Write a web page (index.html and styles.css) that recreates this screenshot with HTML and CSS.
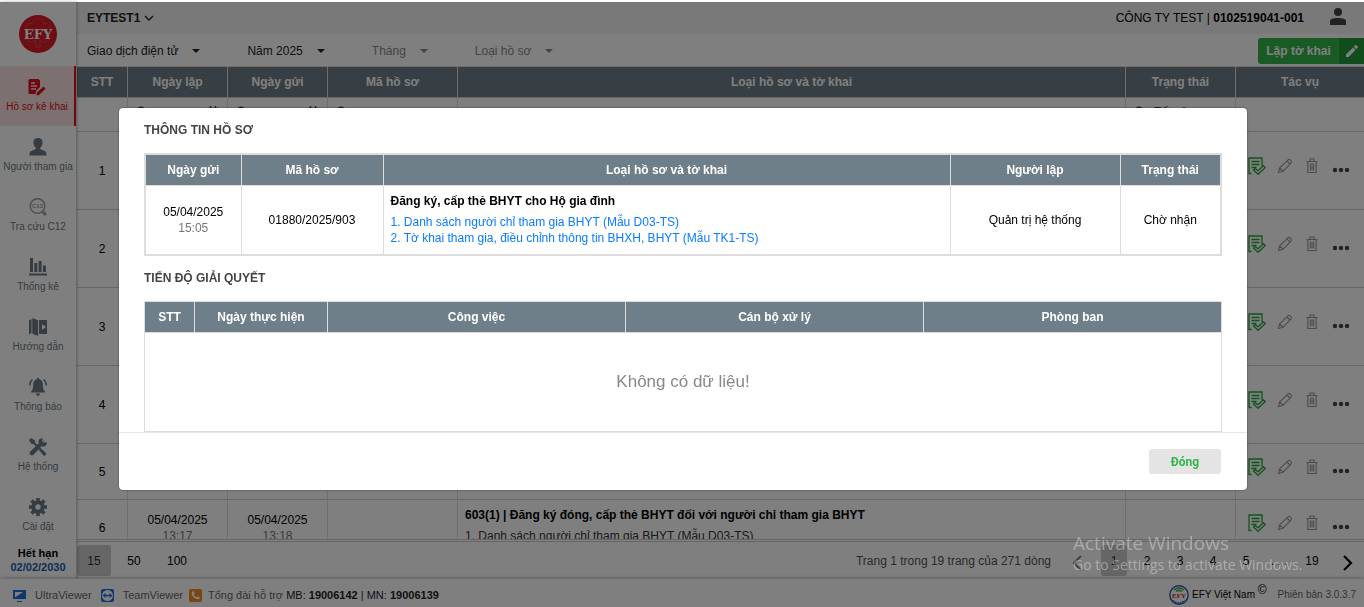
FILE: index.html
```html
<!DOCTYPE html>
<html lang="vi">
<head>
  <meta charset="UTF-8" />
  <meta name="viewport" content="width=device-width, initial-scale=1.0"/>
  <title>EFY - Hồ sơ kê khai</title>
  <link rel="stylesheet" href="styles.css">
</head>
<body>
  <svg class="sprite" aria-hidden="true">
    <symbol id="i-list" viewBox="0 0 18 18">
      <path d="M3.500 16.500H1V1h13v8M3.500 4.500h8M3.500 7.500h8M3.500 10.500h5" fill="none" stroke="currentColor" stroke-width="1.3"/>
      <path d="M5.500 13l1.600-1.600 2.900 2.400 5.400-5 1.900 1.700-7.200 6.800z" fill="none" stroke="currentColor" stroke-width="1.3" stroke-linejoin="round"/>
    </symbol>
    <symbol id="i-edit" viewBox="0 0 16 16">
      <path d="M1.500 14.500l1-4.500L11 1.800c1.500-1.200 4.400 1.300 3.200 3L6 13.200zM10 3l3 3M2.500 10l3.500 3.200" fill="none" stroke="currentColor" stroke-width="1.1"/>
    </symbol>
    <symbol id="i-trash" viewBox="0 0 12 16">
      <path d="M.5 3.500h11M4 3V1h4v2M1.800 4v10.500h8.400V4M4.300 5.500v7M6 5.500v7M7.700 5.500v7" fill="none" stroke="currentColor" stroke-width="1.1"/>
    </symbol>
    <symbol id="i-dots" viewBox="0 0 18 6">
      <circle cx="3" cy="3" r="2.200"/><circle cx="9" cy="3" r="2.200"/><circle cx="15" cy="3" r="2.200"/>
    </symbol>
    <symbol id="i-search" viewBox="0 0 12 12">
      <circle cx="5" cy="5" r="3.800" fill="none" stroke="currentColor" stroke-width="1.400"/><path d="M8 8l3.500 3.500" stroke="currentColor" stroke-width="1.600"/>
    </symbol>
    <symbol id="i-cal" viewBox="0 0 12 12">
      <path d="M1 2.500h10v9H1zM3.500 0v3M8.500 0v3M1 5.500h10" fill="none" stroke="currentColor" stroke-width="1.400"/>
    </symbol>
  </svg>

  <div class="app">
    <div class="main">
      <nav class="sidebar">
        <a class="logo" href="#">
          <svg width="40" height="40" viewBox="0 0 40 40">
            <circle cx="20" cy="20" r="19" fill="#d81c28"/>
            <g fill="none" stroke="#e85a62" stroke-width="1" opacity=".6">
              <path d="M9 16c-3-4 1-8 5-6 0-7 12-7 12 0 4-2 8 2 5 6M9 25c2 4 7 4 9 1v7h4v-7c2 3 7 3 9-1"/>
            </g>
            <text x="20" y="25" class="logo-text" text-anchor="middle">EFY</text>
          </svg>
        </a>
        <a class="nav-item active" href="#">
          <svg width="18" height="18" viewBox="0 0 18 18">
            <path d="M2 1h8.500l1.500 1.500V9L8 13l-.5 3H2a1.500 1.500 0 0 1-1.500-1.500v-12A1.500 1.500 0 0 1 2 1z"/>
            <path d="M3 5h4M3 8h6M3 11h5" stroke="#fdd" stroke-width="1.300"/>
            <path d="M9 14.500L15.500 8.500l2 2.200L11 17l-2.500.5z"/>
          </svg>
          <span>Hồ sơ kê khai</span>
        </a>
        <a class="nav-item" href="#">
          <svg width="18" height="18" viewBox="0 0 18 18"><path d="M9 0c3.200 0 4.800 2.200 4.500 5-.2 2.500-1.300 4.200-2.500 5 0 1 .8 1.600 3 2.300 2.500.8 3.500 1.700 3.500 5.200H.5C.5 14 1.500 13.100 4 12.300c2.200-.7 3-1.300 3-2.300C5.800 9.200 4.700 7.500 4.500 5 4.200 2.200 5.800 0 9 0z"/></svg>
          <span>Người tham gia</span>
        </a>
        <a class="nav-item" href="#">
          <svg width="18" height="18" viewBox="0 0 18 18" class="faded"><circle cx="8.500" cy="8" r="7.300" fill="none" stroke="currentColor" stroke-width="1.500"/><path d="M13 13l4 4" stroke="currentColor" stroke-width="3"/><text x="8.500" y="10" class="c12" text-anchor="middle">C12</text></svg>
          <span>Tra cứu C12</span>
        </a>
        <a class="nav-item" href="#">
          <svg width="18" height="18" viewBox="0 0 18 18"><path d="M1 0h3v14H1zM5.300 5h3v9h-3zM9.600 3h3v11h-3zM13.900 7.500h3V14h-3zM0 15.500h18v2H0z"/></svg>
          <span>Thống kê</span>
        </a>
        <a class="nav-item" href="#">
          <svg width="18" height="18" viewBox="0 0 18 18"><path d="M0 2.500L2.500 1v14L0 16.500zM3.300 0L9 2.300V18l-5.700-2.500zM10 2h8v14h-8z"/><path d="M13 6l4 3-4 3z" fill="#fff"/></svg>
          <span>Hướng dẫn</span>
        </a>
        <a class="nav-item" href="#">
          <svg width="18" height="18" viewBox="0 0 18 18"><path d="M9 0c.8 0 1.300.5 1.300 1.300 2.200.6 3.500 2.500 3.500 5.200 0 4 .7 5.500 2 6.500v1.500H2.200V13c1.300-1 2-2.500 2-6.500 0-2.700 1.300-4.600 3.500-5.200C7.700.5 8.200 0 9 0zM7 15.500h4c0 1.500-1 2.300-2 2.300s-2-.8-2-2.300z"/><path d="M3.500 1.500C1.600 3 .7 5 .7 7.500M14.500 1.500c1.900 1.500 2.800 3.500 2.800 6" fill="none" stroke="currentColor" stroke-width="1.300"/></svg>
          <span>Thông báo</span>
        </a>
        <a class="nav-item" href="#">
          <svg width="18" height="18" viewBox="0 0 18 18"><path d="M2 0l4 2.500v2L8.500 7 7 8.500 4.500 6h-2L0 2z"/><path d="M11 9.500l6 5.500c1 1.500-1 3.500-2.500 2.500L9.500 11.500z"/><path d="M16.300 1.500L13.500 4.300l-.2-.2.200-3.900C10.500-.3 8.800 2.500 9.700 5.500L1.200 13.500c-2 2.300 1 5.200 3.300 3.300l8-8.500c3 .9 5.800-1 5.300-4l-3.600.4z"/></svg>
          <span>Hệ thống</span>
        </a>
        <a class="nav-item" href="#">
          <svg width="18" height="18" viewBox="0 0 18 18"><circle cx="9" cy="9" r="4.700" fill="none" stroke="currentColor" stroke-width="4"/><path d="M9 0v3M9 15v3M0 9h3M15 9h3M2.600 2.600l2.200 2.200M13.200 13.200l2.200 2.200M2.600 15.400l2.200-2.200M13.200 4.800l2.200-2.200" stroke="currentColor" stroke-width="3.600"/></svg>
          <span>Cài đặt</span>
        </a>
        <div class="expire">Hết hạn<br><b>02/02/2030</b></div>
      </nav>

      <div class="content">
        <header class="topbar">
          <button class="account">EYTEST1
            <svg width="10" height="6" viewBox="0 0 10 6"><path d="M1 1l4 4 4-4" fill="none" stroke="currentColor" stroke-width="1.400"/></svg>
          </button>
          <div class="company">CÔNG TY TEST | <b>0102519041-001</b></div>
          <button class="user" aria-label="Tài khoản">
            <svg width="16" height="17" viewBox="0 0 16 17"><circle cx="8" cy="4" r="4"/><path d="M0 17v-4c0-2 3-3 8-3s8 1 8 3v4z"/></svg>
          </button>
        </header>

        <div class="filters">
          <button class="filter f-type">Giao dịch điện tử<i class="caret"></i></button>
          <button class="filter f-year">Năm 2025<i class="caret"></i></button>
          <button class="filter f-month muted">Tháng<i class="caret"></i></button>
          <button class="filter muted">Loại hồ sơ<i class="caret"></i></button>
          <div class="create">
            <button class="create-text">Lập tờ khai</button>
            <button class="create-icon" aria-label="Sửa">
              <svg width="12" height="12" viewBox="0 0 12 12"><path d="M0 12V9.500L7 2.500 9.500 5l-7 7zM7.700 1.800L9.300.2c.4-.3.800-.3 1.100 0l1.400 1.400c.3.300.3.800 0 1.100l-1.600 1.600z"/></svg>
            </button>
          </div>
        </div>

        <div class="grid-scroll">
          <table class="grid">
            <colgroup>
              <col class="w-stt"><col class="w-date"><col class="w-date"><col class="w-code"><col><col class="w-state"><col class="w-act">
            </colgroup>
            <thead>
              <tr><th>STT</th><th>Ngày lập</th><th>Ngày gửi</th><th>Mã hồ sơ</th><th>Loại hồ sơ và tờ khai</th><th>Trạng thái</th><th>Tác vụ</th></tr>
            </thead>
            <tbody>
              <tr class="search-row">
                <td></td>
                <td><div class="search"><svg><use href="#i-search"/></svg><input type="text" aria-label="Ngày lập"><svg><use href="#i-cal"/></svg></div></td>
                <td><div class="search"><svg><use href="#i-search"/></svg><input type="text" aria-label="Ngày gửi"><svg><use href="#i-cal"/></svg></div></td>
                <td><div class="search"><svg><use href="#i-search"/></svg><input type="text" aria-label="Mã hồ sơ"></div></td>
                <td></td>
                <td><div class="search"><svg><use href="#i-search"/></svg><select aria-label="Trạng thái"><option>Tất cả</option></select></div></td>
                <td></td>
              </tr>
              <tr class="tall">
                <td>1</td><td></td><td></td><td></td><td></td><td></td>
                <td><div class="actions"><button class="ok" aria-label="Chi tiết"><svg width="18" height="18"><use href="#i-list"/></svg></button><button aria-label="Sửa"><svg width="16" height="16"><use href="#i-edit"/></svg></button><button class="del" aria-label="Xóa"><svg width="12" height="16"><use href="#i-trash"/></svg></button><button class="more" aria-label="Thêm"><svg width="18" height="6"><use href="#i-dots"/></svg></button></div></td>
              </tr>
              <tr class="tall">
                <td>2</td><td></td><td></td><td></td><td></td><td></td>
                <td><div class="actions"><button class="ok" aria-label="Chi tiết"><svg width="18" height="18"><use href="#i-list"/></svg></button><button aria-label="Sửa"><svg width="16" height="16"><use href="#i-edit"/></svg></button><button class="del" aria-label="Xóa"><svg width="12" height="16"><use href="#i-trash"/></svg></button><button class="more" aria-label="Thêm"><svg width="18" height="6"><use href="#i-dots"/></svg></button></div></td>
              </tr>
              <tr class="tall">
                <td>3</td><td></td><td></td><td></td><td></td><td></td>
                <td><div class="actions"><button class="ok" aria-label="Chi tiết"><svg width="18" height="18"><use href="#i-list"/></svg></button><button aria-label="Sửa"><svg width="16" height="16"><use href="#i-edit"/></svg></button><button class="del" aria-label="Xóa"><svg width="12" height="16"><use href="#i-trash"/></svg></button><button class="more" aria-label="Thêm"><svg width="18" height="6"><use href="#i-dots"/></svg></button></div></td>
              </tr>
              <tr class="tall">
                <td>4</td><td></td><td></td><td></td><td></td><td></td>
                <td><div class="actions"><button class="ok" aria-label="Chi tiết"><svg width="18" height="18"><use href="#i-list"/></svg></button><button aria-label="Sửa"><svg width="16" height="16"><use href="#i-edit"/></svg></button><button class="del" aria-label="Xóa"><svg width="12" height="16"><use href="#i-trash"/></svg></button><button class="more" aria-label="Thêm"><svg width="18" height="6"><use href="#i-dots"/></svg></button></div></td>
              </tr>
              <tr class="short">
                <td>5</td><td></td><td></td><td></td><td></td><td></td>
                <td><div class="actions"><button class="ok" aria-label="Chi tiết"><svg width="18" height="18"><use href="#i-list"/></svg></button><button aria-label="Sửa"><svg width="16" height="16"><use href="#i-edit"/></svg></button><button class="del" aria-label="Xóa"><svg width="12" height="16"><use href="#i-trash"/></svg></button><button class="more" aria-label="Thêm"><svg width="18" height="6"><use href="#i-dots"/></svg></button></div></td>
              </tr>
              <tr class="short">
                <td>6</td>
                <td>05/04/2025<div class="time">13:17</div></td>
                <td>05/04/2025<div class="time">13:18</div></td>
                <td></td>
                <td class="docs"><b>603(1) | Đăng ký đóng, cấp thẻ BHYT đối với người chỉ tham gia BHYT</b><div>1. Danh sách người chỉ tham gia BHYT (Mẫu D03-TS)</div></td>
                <td></td>
                <td><div class="actions"><button class="ok" aria-label="Chi tiết"><svg width="18" height="18"><use href="#i-list"/></svg></button><button aria-label="Sửa"><svg width="16" height="16"><use href="#i-edit"/></svg></button><button class="del" aria-label="Xóa"><svg width="12" height="16"><use href="#i-trash"/></svg></button><button class="more" aria-label="Thêm"><svg width="18" height="6"><use href="#i-dots"/></svg></button></div></td>
              </tr>
            </tbody>
          </table>
        </div>

        <div class="pager">
          <button class="size selected">15</button>
          <button class="size">50</button>
          <button class="size">100</button>
          <span class="info">Trang 1 trong 19 trang của 271 dòng</span>
          <div class="pages">
            <button class="arrow prev" aria-label="Trang trước"><svg width="10" height="16" viewBox="0 0 10 16"><path d="M9 1L2 8l7 7" fill="none" stroke="currentColor" stroke-width="2"/></svg></button>
            <button class="selected">1</button>
            <button>2</button>
            <button>3</button>
            <button>4</button>
            <button>5</button>
            <button>. . .</button>
            <button>19</button>
            <button class="arrow" aria-label="Trang sau"><svg width="10" height="16" viewBox="0 0 10 16"><path d="M1 1l7 7-7 7" fill="none" stroke="currentColor" stroke-width="2.200"/></svg></button>
          </div>
        </div>
      </div>
    </div>

    <footer class="footer">
      <a class="ultra" href="#"><svg width="13" height="13" viewBox="0 0 13 13"><path d="M0 1h13v9H0zM4 12h5v1H4z" fill="#1f72dd"/><path d="M2 8.500V3h8z" fill="#fff"/></svg>UltraViewer</a>
      <a href="#"><svg width="13" height="13" viewBox="0 0 13 13"><rect width="13" height="13" rx="2" fill="#1f72dd"/><circle cx="6.500" cy="6.500" r="5.500" fill="#fff"/><path d="M1.500 6.500L4.500 4v1.800h4V4l3 2.500-3 2.500V7.300h-4V9z" fill="#1f72dd"/></svg>TeamViewer</a>
      <div class="support"><svg width="13" height="13" viewBox="0 0 13 13"><rect width="13" height="13" rx="2" fill="#f28a20"/><path d="M3 2.500l1.500-.5 1.300 2.500-1 1c.5 1.300 1.400 2.200 2.700 2.700l1-1L11 8.500 10.500 10c-4 1.500-9-3.500-7.500-7.500z" fill="#fff"/></svg><div>Tổng đài hỗ trợ <span>MB: <b>19006142</b> | MN: <b>19006139</b></span></div></div>
      <div class="brand">
        <svg width="20" height="20" viewBox="0 0 20 20"><circle cx="10" cy="10" r="9.200" fill="#fff" stroke="#1c5fae" stroke-width="1.400"/><path d="M5 5c3-2.500 7-2.500 10 0M7 6.500c2-1.500 4-1.500 6 0" fill="none" stroke="#3fae49" stroke-width="1.500"/><path d="M4 15.500c3.500 3 8.500 3 12 0" fill="none" stroke="#1c5fae" stroke-width="1.500" stroke-dasharray="1.500 1"/><text x="10" y="13" class="brand-text" text-anchor="middle">EFY</text></svg>
        <span class="name">EFY Việt Nam <sup>©</sup></span>
        <span>Phiên bản 3.0.3.7</span>
      </div>
    </footer>
  </div>

  <div class="overlay">
    <div class="modal" role="dialog" aria-modal="true" aria-labelledby="modal-title">
      <div class="modal-body">
        <h2 id="modal-title">THÔNG TIN HỒ SƠ</h2>
        <table class="detail info-table">
          <colgroup><col class="c-date"><col class="c-code"><col><col class="c-user"><col class="c-state"></colgroup>
          <thead>
            <tr><th>Ngày gửi</th><th>Mã hồ sơ</th><th>Loại hồ sơ và tờ khai</th><th>Người lập</th><th>Trạng thái</th></tr>
          </thead>
          <tbody>
            <tr>
              <td>05/04/2025<div class="time">15:05</div></td>
              <td>01880/2025/903</td>
              <td class="docs"><b>Đăng ký, cấp thẻ BHYT cho Hộ gia đình</b><a href="#">1. Danh sách người chỉ tham gia BHYT (Mẫu D03-TS)</a><a href="#">2. Tờ khai tham gia, điều chỉnh thông tin BHXH, BHYT (Mẫu TK1-TS)</a></td>
              <td>Quản trị hệ thống</td>
              <td>Chờ nhận</td>
            </tr>
          </tbody>
        </table>
        <h2>TIẾN ĐỘ GIẢI QUYẾT</h2>
        <table class="detail progress-table">
          <colgroup><col class="c-stt"><col class="c-done"><col><col><col></colgroup>
          <thead>
            <tr><th>STT</th><th>Ngày thực hiện</th><th>Công việc</th><th>Cán bộ xử lý</th><th>Phòng ban</th></tr>
          </thead>
          <tbody>
            <tr><td colspan="5" class="empty">Không có dữ liệu!</td></tr>
          </tbody>
        </table>
      </div>
      <div class="modal-footer">
        <button class="close">Đóng</button>
      </div>
    </div>
  </div>

  <div class="watermark">
    <div class="line1">Activate Windows</div>
    <div class="line2">Go to Settings to activate Windows.</div>
  </div>
</body>
</html>
```
FILE: styles.css
```css
:root {
  --slate: #6f7f89;
  --line: #ddd;
  --red: #df1119;
  --green: #34b44a;
}
* {
  box-sizing: border-box;
}
body {
  margin: 0;
  font-family: "Liberation Sans", Arial, sans-serif;
  font-size: 12px;
  line-height: 16px;
  color: #000;
  background: #fff;
}
button, input, select {
  font: inherit;
  color: inherit;
  background: none;
  border: none;
  padding: 0;
  cursor: pointer;
}
a {
  color: inherit;
  text-decoration: none;
}
svg {
  display: block;
  fill: currentColor;
}
.sprite {
  position: absolute;
  width: 0;
  height: 0;
}
.app {
  height: 100vh;
  padding-top: 2px;
  display: flex;
  flex-direction: column;
  overflow: hidden;
}
.main {
  flex: 1;
  min-height: 0;
  display: flex;
}

/* sidebar */
.sidebar {
  width: 77px;
  border-right: 1px solid #d0d0d0;
  box-shadow: 0 0 3px rgba(0,0,0,0.3);
  z-index: 1;
}
.logo {
  height: 64px;
  display: flex;
  align-items: center;
  justify-content: center;
}
.logo-text {
  font: bold 13px "DejaVu Serif", serif;
  fill: #fff;
}
.nav-item {
  height: 60px;
  padding-top: 12px;
  display: flex;
  flex-direction: column;
  align-items: center;
  gap: 4px;
  font-size: 10px;
  line-height: 14px;
  color: #6b7a84;
  white-space: nowrap;
}
.nav-item.active {
  color: var(--red);
  background: #fbe0e0;
  border-right: 2px solid var(--red);
}
.faded {
  opacity: 0.7;
}
.c12 {
  font-size: 6px;
  font-weight: bold;
}
.expire {
  font-size: 11px;
  line-height: 14px;
  text-align: center;
  font-weight: bold;
}
.expire b {
  color: #1a5cad;
}

/* top bar and filters */
.content {
  flex: 1;
  min-width: 0;
  display: flex;
  flex-direction: column;
}
.topbar {
  height: 32px;
  padding: 0 18px 0 10px;
  background: #f2f2f2;
  display: flex;
  align-items: center;
}
.account {
  display: flex;
  align-items: center;
  gap: 4px;
  font-weight: bold;
  color: #222;
}
.company {
  margin-left: auto;
}
.user {
  margin-left: 26px;
  padding-bottom: 4px;
  color: #444;
}
.filters {
  height: 32px;
  padding: 2px 0 0 10px;
  display: flex;
  align-items: center;
  color: #222;
}
.filter {
  display: flex;
  align-items: center;
  gap: 14px;
  white-space: nowrap;
}
.f-type, .f-year, .f-month {
  margin-right: 47px;
}
.muted {
  color: #888;
}
.caret {
  border: 4px solid transparent;
  border-top-color: currentColor;
  border-bottom: none;
}
.create {
  margin-left: auto;
  height: 26px;
  display: flex;
  color: #fff;
  border-radius: 3px 0 0 3px;
  overflow: hidden;
}
.create-text {
  width: 81px;
  background: var(--green);
  font-weight: bold;
}
.create-icon {
  width: 25px;
  display: flex;
  align-items: center;
  justify-content: center;
  background: #239a38;
}

/* main grid */
.grid-scroll {
  flex: 1;
  min-height: 0;
  overflow: hidden;
  border-top: 1px solid var(--line);
  border-bottom: 1px solid #ccc;
}
.grid {
  width: 100%;
  table-layout: fixed;
  border-collapse: separate;
  border-spacing: 0;
}
.w-stt { width: 51px; }
.w-date { width: 100px; }
.w-code { width: 130px; }
.w-state { width: 110px; }
.w-act { width: 128px; }
.grid th, .grid td {
  padding: 0;
  text-align: center;
  border-right: 1px solid var(--line);
  border-bottom: 1px solid #ccc;
}
.grid th:last-child, .grid td:last-child {
  border-right: none;
}
.grid th {
  height: 31px;
  color: #fff;
  background: var(--slate);
}
.search-row td { height: 34px; }
.tall td { height: 78px; }
.short td { height: 56px; }
.time {
  color: #777;
}
.grid .docs {
  padding: 7px 7px 0;
  text-align: left;
  vertical-align: top;
  color: #333;
}
.grid .docs b {
  display: block;
  margin-bottom: 5px;
  color: #000;
}
.search {
  display: flex;
  align-items: center;
  gap: 8px;
  margin: 0 8px 5px;
  color: #444;
}
.search svg {
  width: 12px;
  height: 12px;
  flex: none;
}
.search input, .search select {
  flex: 1;
  min-width: 0;
  appearance: none;
}
.actions {
  display: flex;
  align-items: center;
  gap: 11px;
  padding: 0 0 10px 12px;
  color: #999;
}
.actions .ok {
  color: #27a53d;
}
.actions .del {
  margin-left: 2px;
}
.actions .more {
  color: #444;
  padding-top: 8px;
  margin-left: 3px;
}

/* pager */
.pager {
  height: 38px;
  margin-top: 1px;
  padding-right: 11px;
  border-top: 1px solid #ccc;
  display: flex;
  align-items: center;
}
.pager button {
  height: 31px;
  border-radius: 3px;
}
.pager .size {
  width: 34px;
  margin-right: 6px;
}
.pager .size + .size {
  margin-right: 9px;
}
.pager .selected {
  background: #ccc;
  color: #333;
}
.info {
  margin-left: auto;
  margin-right: 21px;
  color: #555;
}
.pages {
  display: flex;
  gap: 7px;
}
.pages button {
  width: 26px;
  white-space: nowrap;
}
.pages .arrow {
  width: 10px;
  padding-top: 5px;
}
.pages .prev {
  width: 22px;
  color: #888;
}
.pages .arrow:last-child {
  margin-left: 11px;
}

/* footer */
.footer {
  height: 28px;
  padding: 4px 8px 0 13px;
  display: flex;
  align-items: center;
  gap: 6px;
  font-size: 11px;
  color: #666;
  background: #fff;
  box-shadow: 0 -1px 4px rgba(0,0,0,0.25);
  z-index: 1;
  white-space: nowrap;
}
.footer a, .support {
  display: flex;
  align-items: center;
  gap: 9px;
}
.footer .ultra {
  margin-right: 3px;
}
.support {
  gap: 6px;
}
.support span {
  color: #222;
}
.brand {
  margin-left: auto;
  display: flex;
  align-items: center;
  gap: 3px;
  font-size: 10px;
}
.brand .name {
  color: #000;
  margin-right: 8px;
}
.brand sup {
  font-size: 12px;
  line-height: 0;
}
.brand-text {
  font: bold 7px "Liberation Serif", serif;
  fill: #e0202a;
}

/* modal */
.overlay {
  position: fixed;
  inset: 2px 0 0;
  padding: 106px 117px 0 119px;
  background: rgba(0,0,0,0.5);
  z-index: 10;
}
.modal {
  background: #fff;
  border-radius: 4px;
  box-shadow: 0 0 2px rgba(0,0,0,0.6);
}
.modal-body {
  padding: 0 25px;
}
.modal h2 {
  margin: 0;
  padding: 14px 0 15px;
  font-size: 12px;
  line-height: 16px;
  color: #444;
}
.detail {
  width: 100%;
  table-layout: fixed;
  border-collapse: collapse;
  border: 1px solid var(--line);
}
.info-table {
  border-width: 2px;
}
.c-date { width: 96px; }
.c-code { width: 142px; }
.c-user { width: 170px; }
.c-state { width: 101px; }
.c-stt { width: 50px; }
.c-done { width: 133px; }
.detail th, .detail td {
  padding: 0 7px;
  text-align: center;
  border: 1px solid var(--line);
}
.detail th {
  height: 31px;
  color: #fff;
  background: var(--slate);
}
.info-table td {
  height: 70px;
}
.detail .docs {
  text-align: left;
}
.docs a {
  display: block;
  color: #0a7cff;
}
.detail .docs b {
  display: block;
  margin-bottom: 5px;
}
.detail .empty {
  height: 99px;
  font-size: 17px;
  color: #888;
}
.modal-footer {
  border-top: 1px solid #e5e5e5;
  padding: 16px 26px;
  text-align: right;
}
.close {
  width: 72px;
  height: 25px;
  border-radius: 3px;
  background: #e4e4e4;
  color: var(--green);
  font-family: Roboto, sans-serif;
  font-weight: bold;
}

/* activation notice floats over the whole desktop */
.watermark {
  position: fixed;
  right: 54px;
  bottom: 32px;
  width: 237px;
  z-index: 20;
  color: rgba(255,255,255,0.35);
  font-family: "Open Sans", sans-serif;
  white-space: nowrap;
  pointer-events: none;
}
.line1 {
  font-size: 19px;
  line-height: 24px;
}
.line2 {
  font-size: 14px;
  line-height: 20px;
}
```
